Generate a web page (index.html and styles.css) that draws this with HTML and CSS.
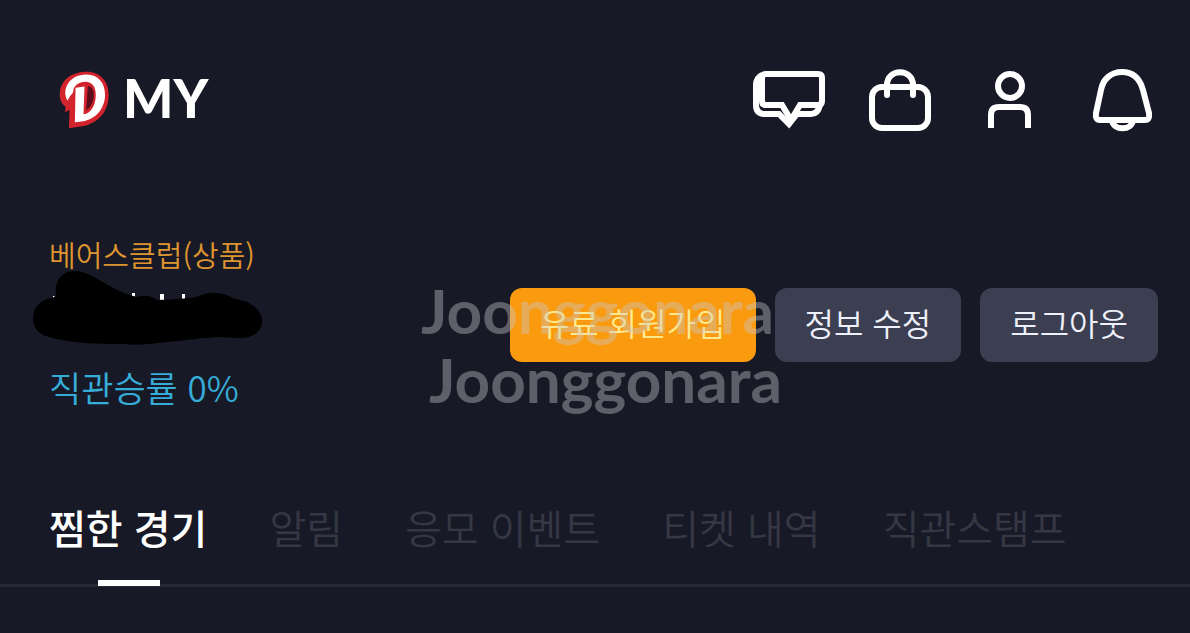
FILE: index.html
```html
<!DOCTYPE html>
<html lang="ko">
<head>
    <meta charset="UTF-8">
    <meta name="viewport" content="width=device-width, initial-scale=1">
    <title>MY</title>
    <link rel="stylesheet" href="styles.css">
</head>
<body>

<header class="header">
    <a href="#" class="brand">
        <svg class="brand-logo" viewBox="55 50 160 180" aria-hidden="true">
            <path fill="#d3242e" d="M142 55C182 55 208 84 208 124C208 178 172 212 128 219L88 225L90 170L76 176L78 160C64 150 58 134 61 114C66 78 98 55 142 55Z"/>
            <path fill="#fff" d="M84 142C75 128 75 110 82 96C92 75 114 63 142 63C176 63 197 88 197 124C197 168 166 200 126 205L106 207L108 103L135 99L132 183C154 180 169 158 169 124C169 100 158 85 138 85C116 85 102 98 101 114C101 121 91 124 84 142Z"/>
            <path fill="#5a0d1c" d="M145 98C158 100 163 110 163 126C163 146 154 164 140 171Z"/>
        </svg>
        <span class="brand-name">MY</span>
    </a>
    <nav class="icons">
        <a href="#" class="icon" aria-label="메시지">
            <svg viewBox="0 0 72 72">
                <path d="M13 10H65Q69 10 69 14V37Q69 41 65 41H47L38 56L29 41H13Q9 41 9 37V14Q9 10 13 10Z"/>
                <path d="M9 11Q3 14 3 21V41Q3 50 12 50H26L36 60L44 50H58Q65 50 67 41"/>
            </svg>
        </a>
        <a href="#" class="icon" aria-label="쇼핑백">
            <svg viewBox="0 0 72 72">
                <rect x="8" y="23" width="56" height="41" rx="10"/>
                <path stroke-linecap="round" d="M23 31V21C23 4 49 4 49 21V31"/>
            </svg>
        </a>
        <a href="#" class="icon" aria-label="내 정보">
            <svg viewBox="0 0 72 72">
                <circle cx="35" cy="22" r="12"/>
                <path d="M16 64V51Q16 43 24 43H45Q53 43 53 51V64"/>
            </svg>
        </a>
        <a href="#" class="icon" aria-label="알림함">
            <svg viewBox="0 0 72 72">
                <path d="M36 8C25 8 17 15 15 26L10 49Q9 56 14 56H59Q64 56 63 49L57 26C54 15 47 8 36 8Z"/>
                <path d="M26 56C27 67 46 67 47 56"/>
            </svg>
        </a>
    </nav>
</header>

<main>
    <section class="profile">
        <div class="user">
            <p class="club">베어스클럽(상품)</p>
            <div class="user-name">
                <svg class="name-cover" viewBox="0 0 230 76" aria-hidden="true">
                    <path fill="#fff" d="M99 22h3v6h-3zM127 23h4v7h-4zM149 23h3v6h-3zM20 25h3v3h-3z"/>
                    <path d="M18 27C25 26 22 22 23 16C25 2 38-3 52 2C68 8 84 22 104 26C112 23 120 26 124 29C140 28 158 28 166 25C180 19 192 22 202 28C218 30 229 39 229 50C229 62 218 68 204 67C190 65 166 67 146 70C120 72 108 75 92 73C62 73 38 72 20 67C6 64 0 58 0 47C0 36 8 29 18 27Z"/>
                </svg>
            </div>
            <p class="win-rate">직관승률 0%</p>
        </div>
        <div class="actions">
            <button type="button" class="btn btn-join">유료 회원가입</button>
            <button type="button" class="btn">정보 수정</button>
            <button type="button" class="btn">로그아웃</button>
        </div>
        <span class="watermark watermark-top">Joonggonara</span>
        <span class="watermark watermark-bottom">Joonggonara</span>
    </section>

    <nav class="tabs">
        <a href="#" class="tab active">찜한 경기</a>
        <a href="#" class="tab">알림</a>
        <a href="#" class="tab">응모 이벤트</a>
        <a href="#" class="tab">티켓 내역</a>
        <a href="#" class="tab">직관스탬프</a>
    </nav>
</main>

</body>
</html>
```

FILE: styles.css
```css
:root {
    --background-color: #181926;
    --button-color: #3b3f51;
    --join-color: #fa9a0e;
    --club-color: #df952f;
    --rate-color: #36acd8;
    --muted-color: #353744;
    --line-color: #282935;
}

* {
    box-sizing: border-box;
}

body {
    margin: 0;
    background-color: var(--background-color);
    color: white;
    font-family: "Noto Sans CJK KR", sans-serif;
    font-weight: 350;
}

a {
    color: inherit;
    text-decoration: none;
}

p {
    margin: 0;
}

/* Header */
.header {
    display: flex;
    justify-content: space-between;
    align-items: center;
    padding: 64px 32px 0 58px;
}

.brand {
    display: flex;
    align-items: center;
    gap: 12px;
}

.brand-logo {
    width: 53px;
    height: 60px;
}

.brand-name {
    padding-bottom: 4px;
    font-family: Lato, sans-serif;
    font-size: 53px;
    font-weight: 900;
    line-height: 60px;
}

.icons {
    display: flex;
    gap: 39px;
}

.icon svg {
    display: block;
    width: 72px;
    height: 72px;
    fill: none;
    stroke: white;
    stroke-width: 6;
}

/* Profile */
.profile {
    position: relative;
    display: flex;
    justify-content: space-between;
    align-items: center;
    padding: 98px 32px 92px 49px;
}

.club {
    color: var(--club-color);
    font-size: 29px;
    line-height: 40px;
}

.user-name {
    position: relative;
    height: 88px;
}

.name-cover {
    position: absolute;
    top: -3px;
    left: -16px;
    width: 230px;
    height: 76px;
    overflow: visible;
}

.win-rate {
    color: var(--rate-color);
    font-size: 35px;
    line-height: 50px;
}

.actions {
    display: flex;
    gap: 19px;
    padding-top: 4px;
}

.btn {
    padding: 10px 30px 16px;
    border: none;
    border-radius: 12px;
    background-color: var(--button-color);
    color: #eef0fa;
    font: inherit;
    font-size: 32px;
    line-height: 48px;
    white-space: nowrap;
    cursor: pointer;
}

.btn-join {
    background-color: var(--join-color);
    color: #ffe98f;
}

.watermark {
    position: absolute;
    color: rgba(200, 200, 205, 0.4);
    font-family: Lato, sans-serif;
    font-size: 62px;
    font-weight: 700;
    line-height: 70px;
    pointer-events: none;
}

.watermark-top {
    top: 139px;
    left: 421px;
}

.watermark-bottom {
    top: 208px;
    left: 429px;
}

/* Tabs */
.tabs {
    display: flex;
    gap: 62px;
    padding: 0 49px;
    border-bottom: 3px solid var(--line-color);
}

.tab {
    position: relative;
    padding-bottom: 34px;
    color: var(--muted-color);
    font-size: 40px;
    line-height: 46px;
    white-space: nowrap;
}

.tab.active {
    color: white;
    font-weight: 500;
}

.tab.active::after {
    content: '';
    position: absolute;
    bottom: -2px;
    left: 50%;
    width: 62px;
    height: 6px;
    margin-left: -30px;
    background-color: white;
}
```
